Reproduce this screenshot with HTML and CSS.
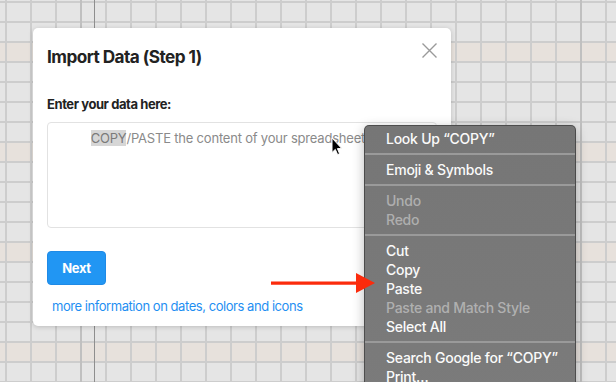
FILE: index.html
```html
<!DOCTYPE html>
<html>
<head>
<meta charset="utf-8">
<link rel="stylesheet" href="styles.css">
</head>
<body>
<div class="page">
  <div class="dialog">
    <div class="dlg-head">
      <h1 class="dlg-title">Import Data (Step 1)</h1>
      <svg class="dlg-close" width="15" height="15" viewBox="0 0 15 15"><path d="M0.5 0.5 L14.5 14.5 M14.5 0.5 L0.5 14.5" stroke="#9a9a9a" stroke-width="1.4" fill="none"/></svg>
    </div>
    <div class="dlg-label">Enter your data here:</div>
    <div class="paste-box"><span class="sel">COPY</span>/PASTE the content of your spreadsheet Here</div>
    <button class="btn-next">Next</button>
    <a class="more-link">more information on dates, colors and icons</a>
  </div>

  <svg class="cursor" width="12" height="19" viewBox="0 0 12 19"><path d="M1 1 L1 15.5 L4.3 12.4 L6.6 17.6 L8.6 16.7 L6.4 11.6 L10.8 11.6 Z" fill="#000" stroke="#fff" stroke-width="1" stroke-linejoin="round"/></svg>

  <div class="ctx-menu">
    <div class="ctx-item">Look Up “COPY”</div>
    <div class="ctx-sep"></div>
    <div class="ctx-item">Emoji &amp; Symbols</div>
    <div class="ctx-sep"></div>
    <div class="ctx-item off">Undo</div>
    <div class="ctx-item off">Redo</div>
    <div class="ctx-sep"></div>
    <div class="ctx-item">Cut</div>
    <div class="ctx-item">Copy</div>
    <div class="ctx-item">Paste</div>
    <div class="ctx-item off">Paste and Match Style</div>
    <div class="ctx-item">Select All</div>
    <div class="ctx-sep"></div>
    <div class="ctx-item">Search Google for “COPY”</div>
    <div class="ctx-item">Print…</div>
  </div>

  <svg class="red-arrow" width="106" height="22" viewBox="0 0 106 22"><path d="M0 8.4 L86 8.4 L86 11.8 L0 11.8 Z" fill="#fb2b0c"/><path d="M85 0 L104 10 L85 20 Z" fill="#fb2b0c"/></svg>
</div>
</body>
</html>
```

FILE: styles.css
```css
* { box-sizing: border-box; }
html, body { margin: 0; padding: 0; }
body { font-family: Inter, "Noto Sans", sans-serif; }

.page {
  position: relative;
  width: 616px;
  height: 382px;
  overflow: hidden;
  padding: 28px 0 0 33px;
  background-color: #e5e5e5;
  background-image:
    linear-gradient(to right, transparent 94px, #8e8e8e 94px, #8e8e8e 95.5px, transparent 95.5px),
    linear-gradient(to right, transparent 80px, #c0c0c0 80px, #c0c0c0 82.5px, transparent 82.5px),
    linear-gradient(to right, transparent 580px, #c0c0c0 580px, #c0c0c0 582.5px, transparent 582.5px),
    repeating-linear-gradient(to right, transparent 0 5px, #cdcdcd 5px 6.8px, transparent 6.8px 25px),
    repeating-linear-gradient(to bottom, transparent 0 1px, #cdcdcd 1px 2.8px, transparent 2.8px 20px),
    repeating-linear-gradient(to bottom, transparent 0 42px, #e7e1dc 42px 62px, transparent 62px 100px);
}

.dialog {
  width: 418px;
  background: #fff;
  border-radius: 5px;
  padding: 15px 14px 12px 14px;
  box-shadow: 0 1px 5px rgba(0,0,0,0.18);
}

.dlg-head {
  display: flex;
  justify-content: space-between;
  align-items: flex-start;
}
.dlg-title {
  margin: 3px 0 0 0;
  font-size: 17.2px;
  line-height: 22px;
  font-weight: 700;
  letter-spacing: -0.55px;
  color: #222;
}
.dlg-close { display: block; }

.dlg-label {
  margin-top: 28px;
  font-size: 13px;
  line-height: 16px;
  font-weight: 700;
  letter-spacing: -0.42px;
  color: #222;
}

.paste-box {
  margin-top: 10px;
  height: 106px;
  border: 1px solid #e2e2e2;
  border-radius: 4px;
  padding: 7px 10px 0 14px;
  font-size: 13px;
  line-height: 16px;
  letter-spacing: -0.2px;
  color: #8a8a8a;
  text-align: center;
  white-space: nowrap;
  overflow: hidden;
}
.sel { background: #d6d6d6; color: #7a7a7a; }

.btn-next {
  display: block;
  margin-top: 23px;
  width: 59px;
  height: 34px;
  border: 1px solid #1f8ae6;
  border-radius: 4px;
  background: #2196f3;
  color: #fff;
  font-family: Inter, "Noto Sans", sans-serif;
  font-size: 13px;
  font-weight: 700;
  letter-spacing: -0.3px;
  padding: 0;
}

.more-link {
  display: block;
  margin: 13px 0 0 5px;
  font-size: 13px;
  line-height: 16px;
  letter-spacing: -0.45px;
  color: #1f8ff2;
}

.cursor {
  position: absolute;
  left: 331px;
  top: 137px;
}

.ctx-menu {
  position: absolute;
  left: 364px;
  top: 125px;
  width: 212px;
  height: 280px;
  padding-top: 3px;
  background: linear-gradient(#767676, #7b7b7b);
  border: 1px solid rgba(40,40,40,0.55);
  border-radius: 5px;
  box-shadow: 0 3px 12px rgba(0,0,0,0.28);
}
.ctx-item {
  padding-left: 21px;
  font-size: 14px;
  line-height: 19px;
  font-weight: 500;
  letter-spacing: -0.25px;
  color: #fafafa;
  white-space: nowrap;
}
.ctx-item.off { color: rgba(255,255,255,0.42); }
.ctx-sep {
  height: 2px;
  margin: 5px 0;
  background: #9a9a9a;
}

.red-arrow {
  position: absolute;
  left: 271px;
  top: 273px;
}
```
